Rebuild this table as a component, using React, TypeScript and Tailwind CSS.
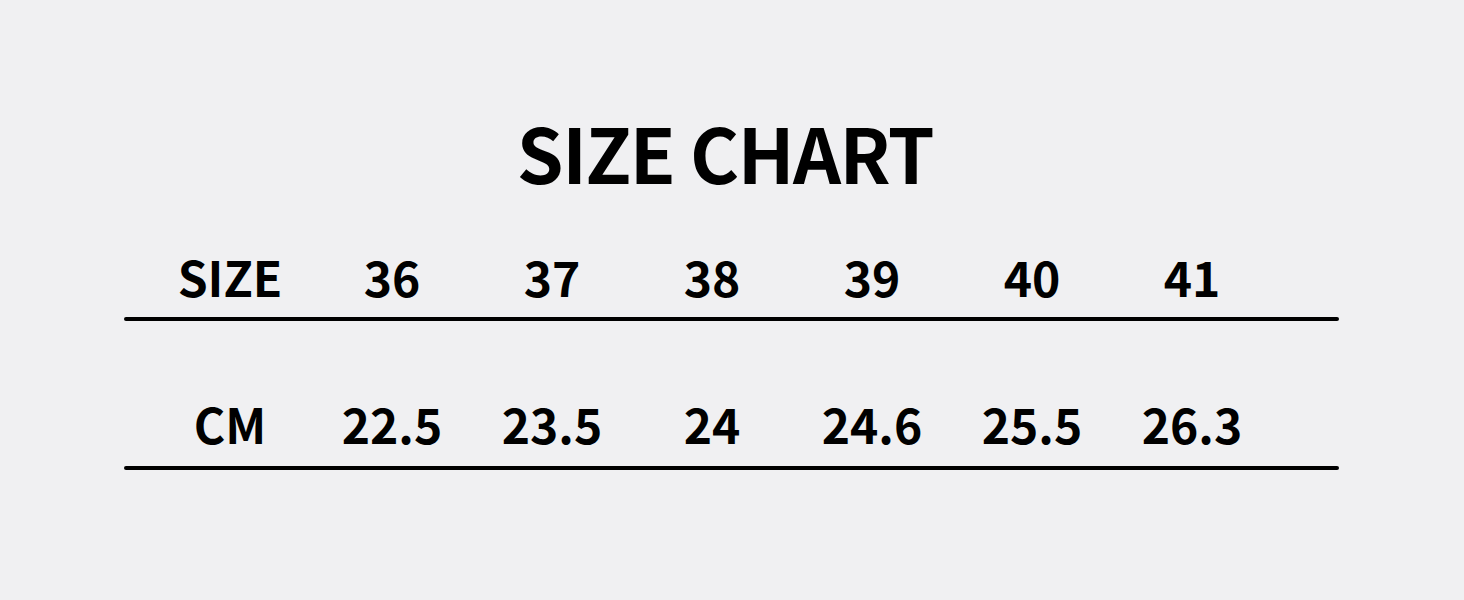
import React from 'react';

const sizes = ['36', '37', '38', '39', '40', '41'];
const cms = ['22.5', '23.5', '24', '24.6', '25.5', '26.3'];

const Row: React.FC<{ label: string; values: string[] }> = ({ label, values }) => (
  <div className="grid grid-cols-[164px_repeat(6,160px)] pl-[24px] text-[48px] font-bold leading-none text-black">
    <div className="text-center">{label}</div>
    {values.map(v => (
      <div key={v} className="text-center">{v}</div>
    ))}
  </div>
);

const App: React.FC = () => {
  return (
    <div
      className="w-[1464px] h-[600px] bg-[#f0f0f2] overflow-hidden"
      style={{ fontFamily: '"Noto Sans CJK SC", "Noto Sans", sans-serif' }}
    >
      <h1 className="pt-[114px] pr-[14px] text-center text-[75px] font-bold leading-none tracking-[-1.5px] text-black">SIZE CHART</h1>
      <div className="ml-[124px] w-[1215px] mt-[63px]">
        <Row label="SIZE" values={sizes} />
        <div className="mt-[17px] h-[4px] bg-black rounded-full" />
        <div className="mt-[78px]">
          <Row label="CM" values={cms} />
        </div>
        <div className="mt-[19px] h-[4px] bg-black rounded-full" />
      </div>
    </div>
  );
};

export default App;
